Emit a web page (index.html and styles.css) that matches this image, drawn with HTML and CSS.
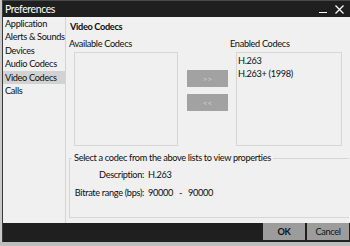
FILE: index.html
```html
<!DOCTYPE html>
<html lang="en">
<head>
    <meta charset="UTF-8">
    <title>Preferences</title>
    <link rel="stylesheet" href="styles.css">
</head>
<body>
    <div class="window">
        <div class="titlebar">
            <span class="title">Preferences</span>
            <span class="controls">
                <span class="minimize"></span>
                <svg class="close" width="9" height="9" viewBox="0 0 9 9"><path d="M0.5 0.5 L8.5 8.5 M8.5 0.5 L0.5 8.5" stroke="#fff" stroke-width="1.2"/></svg>
            </span>
        </div>
        <div class="body">
            <!-- Category list -->
            <ul class="sidebar">
                <li>Application</li>
                <li>Alerts &amp; Sounds</li>
                <li>Devices</li>
                <li>Audio Codecs</li>
                <li class="selected">Video Codecs</li>
                <li>Calls</li>
            </ul>

            <!-- Page -->
            <div class="page">
                <h2>Video Codecs</h2>
                <div class="codecs">
                    <div class="col">
                        <label>Available Codecs</label>
                        <div class="list available"></div>
                    </div>
                    <div class="moves">
                        <button>&gt;&gt;</button>
                        <button>&lt;&lt;</button>
                    </div>
                    <div class="col enabled-col">
                        <label>Enabled Codecs</label>
                        <div class="list enabled">
                            <div>H.263</div>
                            <div>H.263+ (1998)</div>
                        </div>
                    </div>
                </div>
                <fieldset class="props">
                    <legend>Select a codec from the above lists to view properties</legend>
                    <div class="prop">
                        <span class="key">Description:</span>
                        <span>H.263</span>
                    </div>
                    <div class="prop">
                        <span class="key">Bitrate range (bps):</span>
                        <span>90000</span><span class="dash">-</span><span>90000</span>
                    </div>
                </fieldset>
            </div>
        </div>
        <div class="footer">
            <button class="ok">OK</button>
            <button>Cancel</button>
        </div>
    </div>
    <div class="behind"></div>
</body>
</html>
```

FILE: styles.css
```css
body {
    margin: 0;
    background: #c9c9c9;
    font-family: 'Lato', 'Open Sans', sans-serif;
    font-size: 9.2px;
    letter-spacing: -0.33px;
    color: #0d0d0d;
    overflow: hidden;
}

.window {
    margin-left: 2px;
    width: 348px;
    height: 242px;
    background: #1f1f1f;
    border-left: 1px solid #3a3a3a;
    border-top: 1px solid #4a4a4a;
    box-sizing: border-box;
    display: flex;
    flex-direction: column;
}

.titlebar {
    height: 16px;
    display: flex;
    align-items: center;
    justify-content: space-between;
    padding: 0 6px 0 2px;
    color: #fff;
}

.title {
    font-size: 10.5px;
    letter-spacing: -0.4px;
}

.controls {
    display: flex;
    align-items: center;
    gap: 8px;
}

.minimize {
    display: block;
    width: 8px;
    height: 1px;
    background: #fff;
    margin-top: 7px;
}

.body {
    flex: 1;
    display: flex;
    background: #f0f0f0;
}

.sidebar {
    list-style: none;
    margin: 0;
    padding: 0;
    width: 62px;
    border-right: 1px solid #d4d4d4;
}

.sidebar li {
    height: 13.4px;
    line-height: 13.4px;
    padding-left: 2px;
    white-space: nowrap;
}

.sidebar li.selected {
    background: #d2d2d2;
}

.page {
    flex: 1;
    padding: 3px 0 0 3px;
    white-space: nowrap;
}

h2 {
    margin: 0 0 4px;
    padding-left: 1px;
    font-size: 9.2px;
    font-weight: bold;
    line-height: 14px;
}

.codecs {
    display: flex;
}

.col label {
    display: block;
    line-height: 12px;
    margin-bottom: 2px;
}

.list {
    height: 94px;
    border: 1px solid #d6d6d6;
    box-sizing: border-box;
}

.available {
    margin-left: 5px;
    width: 104px;
}

.moves {
    display: flex;
    flex-direction: column;
    gap: 7px;
    padding: 32px 8px 0 9px;
}

.moves button {
    width: 41px;
    height: 17px;
    border: none;
    background: #a2a2a2;
    color: #d0d0d0;
    font-family: inherit;
    font-size: 8px;
    padding: 0;
}

.enabled-col label {
    margin-left: -6px;
}

.enabled {
    width: 106px;
    padding: 1px 1px;
}

.enabled div {
    line-height: 13px;
}

.props {
    margin: 6px 0 0 0;
    width: 280px;
    height: 66px;
    border: 1px solid #d6d6d6;
    border-right: none;
    box-sizing: border-box;
    padding: 2px 0 0 0;
}

.props legend {
    padding: 0 2px;
    margin-left: 2px;
    line-height: 12px;
}

.prop {
    display: flex;
    line-height: 18px;
}

.prop .key {
    flex-shrink: 0;
    width: 74px;
    text-align: right;
    margin-right: 4px;
}

.dash {
    margin: 0 6px;
}

.footer {
    height: 19px;
    display: flex;
    justify-content: flex-end;
    align-items: flex-start;
    gap: 2px;
    padding-right: 1px;
    box-sizing: border-box;
}

.footer button {
    width: 42px;
    height: 17px;
    border: none;
    background: #9c9c9c;
    color: #111;
    font-family: inherit;
    font-size: 9.2px;
    letter-spacing: inherit;
    padding: 0;
}

.footer .ok {
    font-weight: bold;
}

.behind {
    height: 4px;
    background: #bdbdbd;
}
```
